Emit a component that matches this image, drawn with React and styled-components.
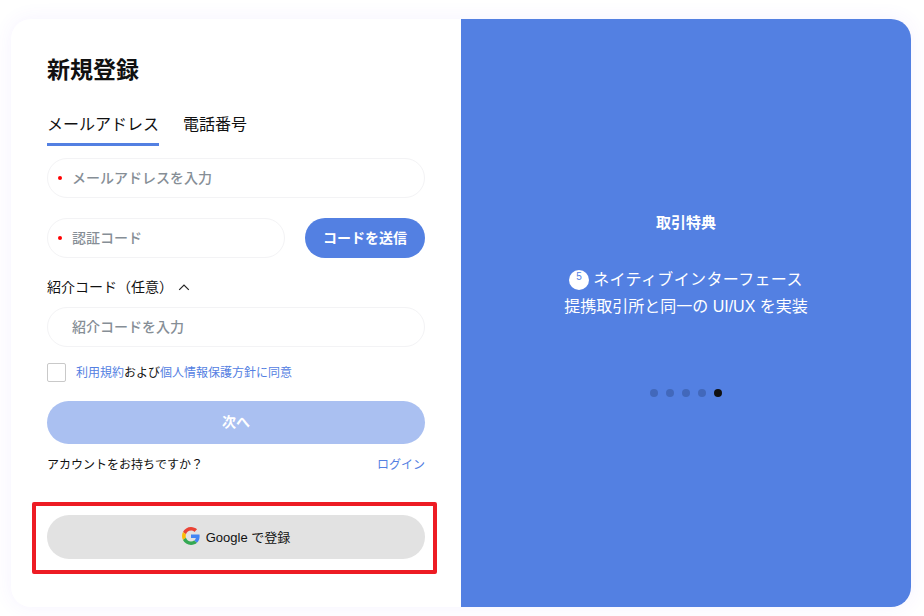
import React from "react";
import styled, { createGlobalStyle } from "styled-components";

const Global = createGlobalStyle`
  html, body { margin: 0; padding: 0; background: #fff; }
  * { box-sizing: border-box; }
  body { font-family: "Liberation Sans", "Noto Sans CJK JP", sans-serif; color: #111; }
`;
const Page = styled.div`
  width: 924px; height: 616px; padding: 19px 13px 9px 11px; overflow: hidden;
`;
const Card = styled.main`
  display: flex; height: 588px; border-radius: 20px; background: #fff;
  box-shadow: 0 0 20px rgba(110, 70, 255, 0.07);
`;
const FormPanel = styled.section`
  width: 450px; padding: 36px 36px 0; display: flex; flex-direction: column;
`;
const Title = styled.h1`
  margin: 0; font-size: 23px; line-height: 30px; font-weight: 700; color: #111;
`;
const Tabs = styled.div`
  display: flex; gap: 24px; margin-top: 27px;
`;
const Tab = styled.div`
  font-size: 16px; line-height: 26px; height: 34px; padding-bottom: 5px; color: #111;
  border-bottom: 3px solid ${p => (p.$active ? "#5380e2" : "transparent")};
`;
const Field = styled.div`
  position: relative; display: flex; align-items: center; height: 40px;
  padding: 0 0 2px 24px; border: 1px solid #f3f3f5; border-radius: 20px;
  font-size: 14px; color: #868e96; font-weight: 500;
  margin-top: ${p => p.$top || 0}px;
`;
const Required = styled.i`
  position: absolute; left: 10px; top: 17px; width: 4px; height: 4px; border-radius: 50%; background: #ff0000;
`;
const FieldRow = styled.div`
  display: flex; gap: 20px; margin-top: 20px;
  ${Field} { flex: 1; }
`;
const SendButton = styled.button`
  width: 120px; height: 40px; border: 0; border-radius: 20px; background: #5380e2; color: #fff;
  font: 700 14px "Liberation Sans", "Noto Sans CJK JP", sans-serif; padding: 0 0 2px;
`;
const Toggle = styled.div`
  display: flex; align-items: center; gap: 5px; height: 20px; margin-top: 19px; padding-bottom: 2px;
  font-size: 14px; color: #111;
  svg { display: block; margin-top: 2px; }
`;
const Agree = styled.label`
  display: flex; align-items: center; gap: 10px; height: 19px; margin-top: 16px; font-size: 12px; color: #111;
`;
const AgreeText = styled.span`
  padding-bottom: 2px;
`;
const Check = styled.span`
  width: 19px; height: 19px; border: 1px solid #c9c9c9; border-radius: 2px; background: #fff;
`;
const Link = styled.a`
  color: #5380e2; text-decoration: none;
`;
const NextButton = styled.button`
  height: 43px; margin-top: 19px; border: 0; border-radius: 22px; background: #aac0f1; color: #fff; padding: 0 0 3px;
  font: 700 14px "Liberation Sans", "Noto Sans CJK JP", sans-serif;
`;
const AccountRow = styled.div`
  display: flex; justify-content: space-between; align-items: center; height: 20px; margin-top: 10px; padding-bottom: 2px;
  font-size: 12px; color: #111;
`;
const GoogleWrap = styled.div`
  position: relative; margin-top: 41px;
`;
const GoogleButton = styled.button`
  width: 100%; height: 44px; display: flex; align-items: center; justify-content: center; gap: 6px;
  border: 0; border-radius: 22px; background: #e2e2e2; color: #111; padding: 0 0 2px;
  font: 400 13px "Liberation Sans", "Noto Sans CJK JP", sans-serif;
`;
const Highlight = styled.div`
  position: absolute; inset: -13px -12px -15px -15px; border: 4px solid #ed1c24; border-radius: 2px; pointer-events: none;
`;
const Promo = styled.section`
  width: 450px; background: #5380e2; border-radius: 0 20px 20px 0; color: #fff;
  display: flex; flex-direction: column; align-items: center; padding-top: 194px;
`;
const PromoTitle = styled.h2`
  margin: 0; font-size: 15px; line-height: 20px; font-weight: 700;
`;
const PromoHead = styled.div`
  display: flex; align-items: center; gap: 4px; margin-top: 33px; font-size: 16px; line-height: 27px; letter-spacing: 0.35px;
`;
const Badge = styled.span`
  position: relative; width: 20px; height: 20px; border-radius: 50%; background: #fff; color: #5380e2;
  font-size: 10px; line-height: 13px; text-align: center; display: block;
`;
const PromoText = styled.div`
  font-size: 16px; line-height: 27px;
`;
const Dots = styled.div`
  display: flex; gap: 8px; margin-top: 69px;
`;
const Dot = styled.span`
  width: 8px; height: 8px; border-radius: 50%; background: ${p => (p.$active ? "#111" : "#4268bb")};
`;

const GoogleIcon = () => (
  <svg width="18" height="18" viewBox="0 0 48 48" aria-hidden="true">
    <path fill="#EA4335" d="M24 9.5c3.54 0 6.71 1.22 9.21 3.6l6.85-6.85C35.9 2.38 30.47 0 24 0 14.62 0 6.51 5.38 2.56 13.22l7.98 6.19C12.43 13.72 17.74 9.5 24 9.5z" />
    <path fill="#4285F4" d="M46.98 24.55c0-1.57-.15-3.09-.38-4.55H24v9.02h12.94c-.58 2.96-2.26 5.48-4.78 7.18l7.73 6c4.51-4.18 7.09-10.36 7.09-17.65z" />
    <path fill="#FBBC05" d="M10.53 28.59c-.48-1.45-.76-2.99-.76-4.59s.27-3.14.76-4.59l-7.98-6.19C.92 16.46 0 20.12 0 24c0 3.88.92 7.54 2.56 10.78l7.97-6.19z" />
    <path fill="#34A853" d="M24 48c6.48 0 11.93-2.13 15.89-5.81l-7.73-6c-2.15 1.45-4.92 2.3-8.16 2.3-6.26 0-11.57-4.22-13.47-9.91l-7.98 6.19C6.51 42.62 14.62 48 24 48z" />
  </svg>
);

const Chevron = () => (
  <svg width="12" height="8" viewBox="0 0 12 8" fill="none" stroke="#222" strokeWidth="1.2" aria-hidden="true">
    <path d="M1.2 6.8 6 2l4.8 4.8" />
  </svg>
);

export default function App() {
  return (
    <Page>
      <Global />
      <Card>
        <FormPanel>
          <Title>新規登録</Title>
          <Tabs>
            <Tab $active>メールアドレス</Tab>
            <Tab>電話番号</Tab>
          </Tabs>
          <Field $top={12}><Required />メールアドレスを入力</Field>
          <FieldRow>
            <Field><Required />認証コード</Field>
            <SendButton>コードを送信</SendButton>
          </FieldRow>
          <Toggle>紹介コード（任意）<Chevron /></Toggle>
          <Field $top={10}>紹介コードを入力</Field>
          <Agree>
            <Check />
            <AgreeText><Link>利用規約</Link>および<Link>個人情報保護方針に同意</Link></AgreeText>
          </Agree>
          <NextButton>次へ</NextButton>
          <AccountRow>
            <span>アカウントをお持ちですか？</span>
            <Link>ログイン</Link>
          </AccountRow>
          <GoogleWrap>
            <GoogleButton><GoogleIcon />Google で登録</GoogleButton>
            <Highlight />
          </GoogleWrap>
        </FormPanel>
        <Promo>
          <PromoTitle>取引特典</PromoTitle>
          <PromoHead><Badge>5</Badge>ネイティブインターフェース</PromoHead>
          <PromoText>提携取引所と同一の UI/UX を実装</PromoText>
          <Dots>
            <Dot /><Dot /><Dot /><Dot /><Dot $active />
          </Dots>
        </Promo>
      </Card>
    </Page>
  );
}
